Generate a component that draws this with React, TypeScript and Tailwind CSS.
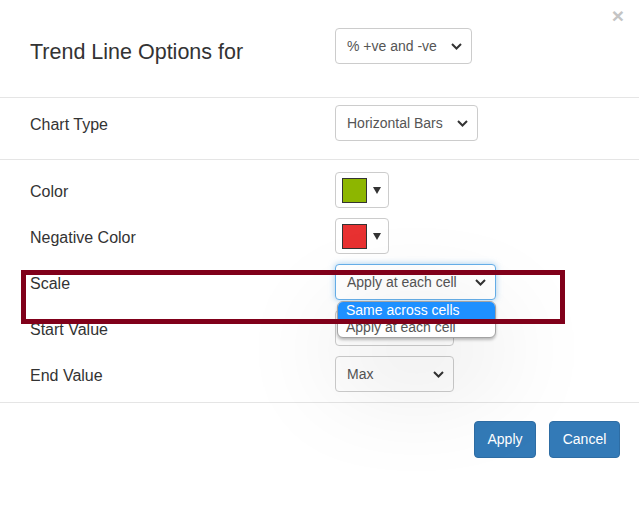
import type { ReactNode } from 'react'

function Chevron() {
  return (
    <svg width="11" height="7" viewBox="0 0 11 7" className="shrink-0">
      <path d="M1 1l4.5 4.5L10 1" fill="none" stroke="#333" strokeWidth="2" />
    </svg>
  )
}

interface SelectBoxProps {
  value: string
  width: string
  focused?: boolean
}

function SelectBox({ value, width, focused }: SelectBoxProps) {
  return (
    <div
      className={`${width} h-[36px] flex items-center justify-between pl-[11px] pr-[9px] rounded-[4px] bg-white text-[14px] text-[#555] ${
        focused ? 'border border-[#66afe9] shadow-[0_0_6px_rgba(102,175,233,0.6)]' : 'border border-[#ccc]'
      }`}
    >
      <span>{value}</span>
      <Chevron />
    </div>
  )
}

function ColorButton({ color }: { color: string }) {
  return (
    <div className="w-[54px] h-[36px] flex items-center gap-[6px] pl-[6px] rounded-[4px] border border-[#ccc] bg-white">
      <span className="w-[25px] h-[25px] border border-[#333]" style={{ backgroundColor: color }} />
      <svg width="8" height="7" viewBox="0 0 8 7">
        <path d="M0 0h8L4 7z" fill="#333" />
      </svg>
    </div>
  )
}

function Row({ label, children }: { label: string; children: ReactNode }) {
  return (
    <div className="flex items-center h-[36px]">
      <div className="w-[305px] pt-[4px] text-[16px]">{label}</div>
      {children}
    </div>
  )
}

export default function App() {
  return (
    <div className="relative w-[639px] h-[508px] bg-white text-[#333] font-['Liberation_Sans',Arial,sans-serif]">
      {/* Header */}
      <div className="relative flex items-start h-[98px] pt-[28px] px-[30px] border-b border-[#e5e5e5]">
        <h4 className="w-[305px] mt-[9px] text-[21.5px] leading-[30px]">Trend Line Options for</h4>
        <SelectBox value="% +ve and -ve" width="w-[137px]" />
        <span className="absolute right-[15px] top-0 text-[21px] font-bold text-[#c4c4c4]">×</span>
      </div>

      {/* Chart type */}
      <div className="h-[62px] pt-[7px] px-[30px] border-b border-[#e5e5e5]">
        <Row label="Chart Type">
          <SelectBox value="Horizontal Bars" width="w-[143px]" />
        </Row>
      </div>

      {/* Body */}
      <div className="flex flex-col gap-[10px] pt-[12px] pb-[10px] px-[30px] border-b border-[#e5e5e5]">
        <Row label="Color">
          <ColorButton color="#8db600" />
        </Row>
        <Row label="Negative Color">
          <ColorButton color="#e83131" />
        </Row>
        <Row label="Scale">
          <SelectBox value="Apply at each cell" width="w-[161px]" focused />
        </Row>
        <Row label="Start Value">
          <SelectBox value="" width="w-[119px]" />
        </Row>
        <Row label="End Value">
          <SelectBox value="Max" width="w-[119px]" />
        </Row>
      </div>

      {/* Footer */}
      <div className="flex justify-end gap-[13px] pt-[18px] pr-[19px]">
        <button className="w-[62px] h-[37px] rounded-[4px] bg-[#337ab7] border border-[#2e6da4] text-white text-[14px]">
          Apply
        </button>
        <button className="w-[71px] h-[37px] rounded-[4px] bg-[#337ab7] border border-[#2e6da4] text-white text-[14px]">
          Cancel
        </button>
      </div>

      {/* Open dropdown list */}
      <div className="absolute left-[337px] top-[301px] w-[159px] h-[37px] overflow-hidden rounded-[6px] border border-[#a3a3a3] bg-white text-[14px] leading-[17px] shadow-[0_2px_3px_rgba(0,0,0,0.25),0_30px_110px_rgba(0,0,0,0.2)]">
        <div className="h-[17px] pl-[8px] bg-[#1e90ff] text-white">Same across cells</div>
        <div className="h-[18px] pl-[8px] text-[#555]">Apply at each cell</div>
      </div>

      {/* Annotation box */}
      <div className="absolute left-[21px] top-[270px] w-[544px] h-[54px] border-[5px] border-[#80001a]" />
    </div>
  )
}
